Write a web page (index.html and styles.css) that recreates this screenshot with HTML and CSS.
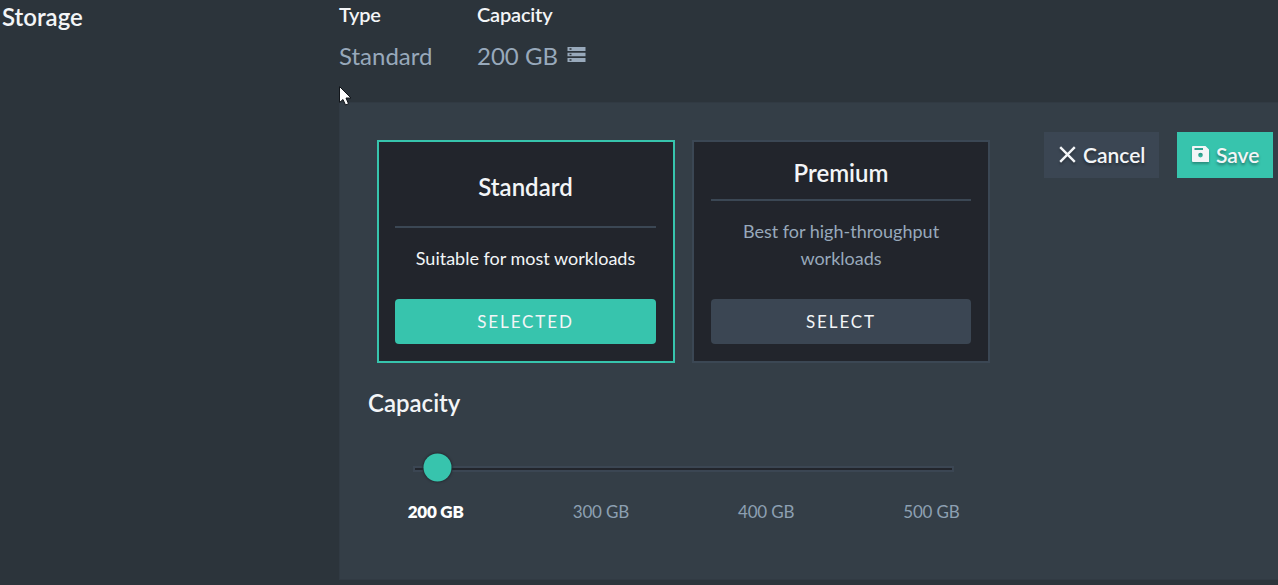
FILE: index.html
```html
<!DOCTYPE html>
<html lang="en">
<head>
<meta charset="utf-8">
<title>Storage</title>
<link rel="stylesheet" href="styles.css">
</head>
<body>
<main class="storage">
  <h2 class="section-title">Storage</h2>
  <section class="content">
    <div class="summary">
      <div class="fact fact-type"><div class="fact-label">Type</div><div class="fact-value">Standard</div></div>
      <div class="fact"><div class="fact-label">Capacity</div><div class="fact-value">200 GB
        <svg class="server-icon" width="19" height="16" viewBox="0 0 19 16"><path fill="currentColor" d="M.5 0h18v4H.5zM.5 5.800h18v3.400H.5zM.5 11h18v4H.5z"/><path fill="#2c343b" d="M2.500 1.200h2v1.600h-2zM2.500 6.700h2v1.600h-2zM2.500 12.200h2v1.600h-2z"/></svg></div></div>
    </div>
    <div class="panel">
      <div class="panel-main">
        <div class="plans">
          <article class="plan plan-active">
            <h3 class="plan-name">Standard</h3>
            <p class="plan-text">Suitable for most workloads</p>
            <button class="plan-button">SELECTED</button>
          </article>
          <article class="plan">
            <h3 class="plan-name">Premium</h3>
            <p class="plan-text">Best for high-throughput workloads</p>
            <button class="plan-button">SELECT</button>
          </article>
        </div>
        <h3 class="capacity-title">Capacity</h3>
        <div class="slider"><span class="thumb"></span></div>
        <div class="ticks"><span class="tick tick-active">200 GB</span><span class="tick">300 GB</span><span class="tick">400 GB</span><span class="tick">500 GB</span></div>
      </div>
      <div class="actions">
        <button class="action cancel"><svg class="action-icon" width="17" height="17" viewBox="0 0 17 17"><path d="M1.200 1.200l14.600 14.600M15.800 1.200L1.200 15.800" fill="none" stroke="currentColor" stroke-width="2.400"/></svg>Cancel</button>
        <button class="action save"><svg class="action-icon" width="17" height="17" viewBox="0 0 17 17"><path fill="currentColor" fill-rule="evenodd" d="M1 0h12.500L17 3.500V16H1q-1 0-1-1V1q0-1 1-1zM2.500 2v2H11V2zM8.500 6.800a2.300 2.300 0 1 0 0 4.600 2.300 2.300 0 0 0 0-4.600z"/></svg>Save</button>
      </div>
    </div>
  </section>
</main>
<svg class="cursor" width="14" height="20" viewBox="0 0 14 20"><path d="M.5.500v16l3.500-3 2.500 5.500 3-1.300L7 12h5z" fill="#fff" stroke="#11151a"/></svg>
</body>
</html>
```
FILE: styles.css
```css
* { box-sizing: border-box; }
body { margin: 0; height: 585px; overflow: hidden; background: #2c343b; color: #f3f5f7; font-family: Lato, "Liberation Sans", sans-serif; }
h2, h3, p { margin: 0; }
button { border: 0; color: inherit; font-family: inherit; }
svg { flex: none; }
.storage { display: grid; grid-template-columns: 339px 1fr; height: 585px; }
.section-title { padding: 2px 0 0 2px; font-size: 24px; line-height: 30px; font-weight: 600; }
.summary { display: flex; height: 102px; }
.fact-type { width: 138px; }
.fact-label { padding-top: 2px; font-size: 20px; line-height: 24px; font-weight: 600; letter-spacing: -0.2px; }
.fact-value { display: flex; margin-top: 15px; font-size: 24px; line-height: 30px; color: #98a9bb; }
.server-icon { margin: 6px 0 0 9px; }
.panel { display: flex; height: 478px; background: #343e47; border: 1px solid #313a43; border-right: 0; }
.panel-main { width: 704px; }
.plans { display: flex; gap: 17px; padding: 37px 0 0 37px; }
.plan { display: flex; flex-direction: column; width: 298px; height: 223px; padding: 16px 17px 17px 16px; border: 2px solid #3b4754; background: #22252c; text-align: center; }
.plan:last-child { padding-inline: 17px; }
.plan-active { border-color: #37c4ad; }
.plan-name { display: flex; flex: 1; align-items: center; justify-content: center; padding-bottom: 11px; border-bottom: 2px solid #3b4754; font-size: 24px; line-height: 30px; font-weight: 600; }
.plan-text { padding: 17px 16px 27px; font-size: 18px; line-height: 27px; color: #98a9bb; }
.plan-active .plan-text { padding-inline: 0; color: #f3f5f7; }
.plan-button { height: 45px; padding: 0; border-radius: 4px; background: #3b4653; font-size: 17px; letter-spacing: 1.9px; }
.plan-active .plan-button { background: #37c4ad; }
.capacity-title { padding: 25px 0 0 28px; font-size: 24px; line-height: 30px; font-weight: 600; }
.slider { display: flex; align-items: center; width: 541px; height: 6px; margin: 48px 0 0 73px; padding-left: 8px; border: 2px solid #3b4653; background: #22252c; }
.thumb { width: 28px; height: 28px; flex: none; border-radius: 50%; background: #37c4ad; box-shadow: 0 0 2px 1px #252b32; transform: translate(0.5px, -1.5px); }
.ticks { display: flex; width: 661px; margin: 29px 0 0 13px; }
.tick { flex: 1; text-align: center; font-size: 17px; line-height: 22px; letter-spacing: -0.2px; color: #8da0b2; }
.tick-active { color: #fff; font-weight: 800; }
.actions { display: flex; gap: 18px; padding-top: 29px; }
.action { display: flex; align-items: center; height: 46px; padding: 0 0 2px 15px; font-size: 21px; font-weight: 600; text-shadow: 0 2px 3px #0006; }
.action-icon { margin: 0 7px 0 0; filter: drop-shadow(0 2px 1px #0004); }
.cancel { width: 115px; background: #3b4653; }
.save { width: 96px; background: #37c4ad; }
.cursor { position: absolute; left: 339px; top: 86px; }
```
